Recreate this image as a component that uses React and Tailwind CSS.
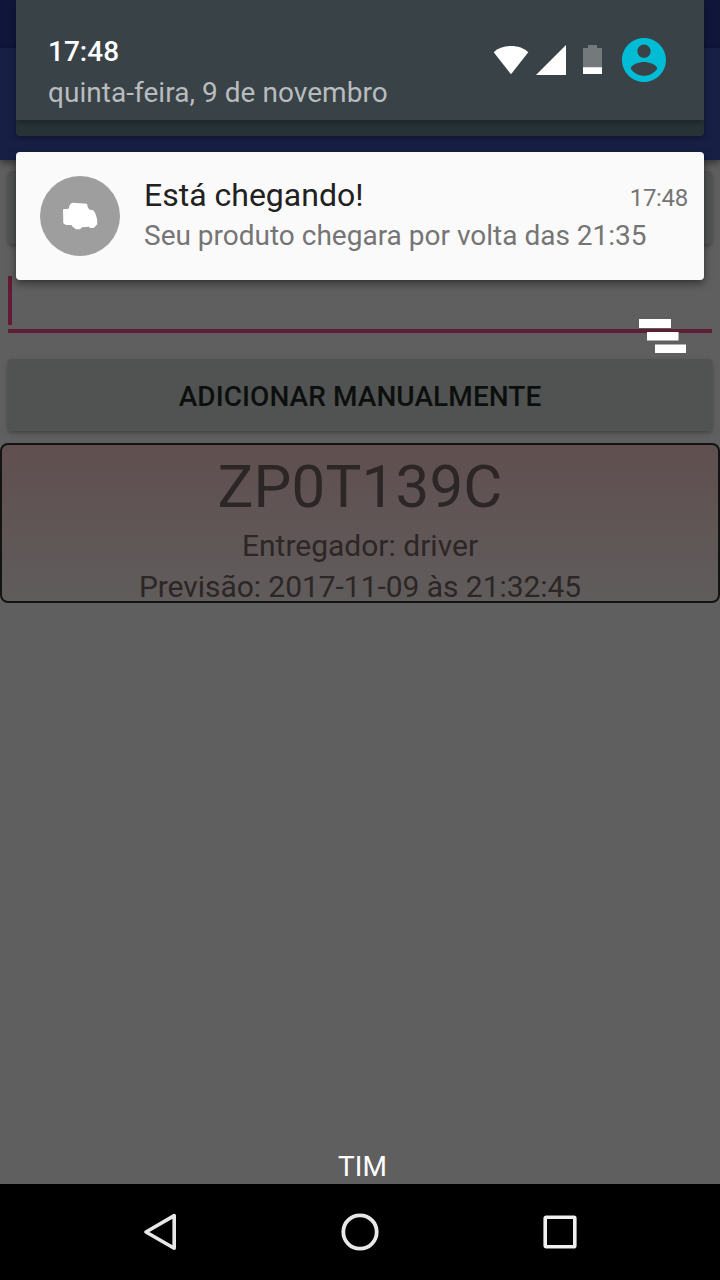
function StatusIcons() {
  return (
    <div className="flex h-11 items-center">
      <svg className="h-[30px] w-[36px]" viewBox="0 0 36 30" fill="#fff">
        <path d="M18 29.200 .7 7.300C5 3 11 1 18 1S31 3 35.300 7.300Z" />
      </svg>
      <svg className="ml-[7px] h-[30px] w-[30px]" viewBox="0 0 30 30" fill="#fff">
        <path d="M30 0V30H0Z" />
      </svg>
      <svg className="ml-[17px] h-[30px] w-[19px]" viewBox="0 0 19 30">
        <path d="M5 0H14V3H19V23H0V3H5Z" fill="#74797b" />
        <path d="M0 22.300H19V29H0Z" fill="#fff" />
      </svg>
      <svg className="ml-5 h-11 w-11" viewBox="2 2 20 20" fill="#00bcd4">
        <path d="M12 2C6.480 2 2 6.480 2 12s4.480 10 10 10 10-4.480 10-10S17.520 2 12 2zm0 3c1.660 0 3 1.340 3 3s-1.340 3-3 3-3-1.340-3-3 1.340-3 3-3zm0 14.200c-2.500 0-4.710-1.280-6-3.220.030-1.990 4-3.080 6-3.080 1.990 0 5.970 1.090 6 3.080-1.290 1.940-3.500 3.220-6 3.220z" />
      </svg>
    </div>
  );
}

function ShadeHeader() {
  return (
    <div className="h-[136px] overflow-hidden rounded-b-[4px] bg-[#263236] shadow-[0_2px_6px_rgba(0,0,0,0.35)]">
      <div className="flex h-[120px] items-start justify-between bg-[#384247] pr-[38px] pl-8 shadow-[0_2px_6px_rgba(0,0,0,0.3)]">
        <div className="pt-[34px]">
          <div className="text-[28px] leading-[36px] font-medium text-white">17:48</div>
          <div className="mt-[5px] text-[28px] leading-[36px] tracking-[0.04px] text-[#b8bcbe]">quinta-feira, 9 de novembro</div>
        </div>
        <div className="pt-[38px]">
          <StatusIcons />
        </div>
      </div>
    </div>
  );
}

function Notification() {
  return (
    <div className="mt-4 flex h-32 rounded-[4px] bg-[#fafafa] pr-4 pl-6 shadow-[0_3px_8px_rgba(0,0,0,0.5)]">
      <div className="mt-6 flex size-20 shrink-0 items-center justify-center rounded-full bg-[#9e9e9e]">
        <svg className="h-[28px] w-[36px]" viewBox="0 0 36 28" fill="#fff">
          <path d="M1 7.300 L6.700 6.700 L7.500 3.500 L9 1.500 L10.700 0.700 L18 1.300 L25 1.800 L25.700 5.300 L27.300 7.500 L31.300 8.300 L33.300 11.300 L35 16.700 L35.300 22.300 L32 25.700 L28.300 26 L26.700 24.700 L20 25.300 L18 27.300 L14 27.300 L10.700 24.700 L9.300 23 L4 23 L1.300 21.300 Z" />
        </svg>
      </div>
      <div className="ml-6 flex-1 pt-6">
        <div className="flex items-baseline justify-between">
          <span className="text-[32px] leading-[38px] text-[#212121]">Está chegando!</span>
          <span className="text-[24px] leading-[30px] tracking-[-0.3px] text-[#757575]">17:48</span>
        </div>
        <div className="mt-1 text-[28px] leading-[36px] text-[#757575]">
          Seu produto chegara por volta das 21:35
        </div>
      </div>
    </div>
  );
}

function DismissIcon() {
  return (
    <svg className="mt-[39px] mr-[18px] h-[34px] w-[47px] self-end" viewBox="0 0 47 34" fill="#fff">
      <path d="M0 0H32V9H0ZM8 13H39.500V21.500H8ZM16 25.500H47V34H16Z" />
    </svg>
  );
}

function TrackingApp() {
  return (
    <div className="flex h-[1184px] flex-col bg-[#5f5f5f]">
      <div className="h-12 shrink-0 bg-[#10163a]" />
      <div className="h-28 shrink-0 bg-[#171f45] shadow-[0_3px_7px_rgba(0,0,0,0.45)]" />
      <div className="mx-2 mt-[11px] h-[73px] shrink-0 rounded-[4px] bg-[#525453] shadow-[0_2px_4px_rgba(0,0,0,0.3)]" />
      <div className="mx-2 mt-8 h-[57px] shrink-0 border-b-4 border-[#5d1f36]">
        <div className="h-[49px] w-1 bg-[#621a35]" />
      </div>
      <div className="mx-2 mt-[26px] flex h-[72px] shrink-0 items-center justify-center rounded-[4px] bg-[#505352] pt-1 text-[28px] font-medium tracking-[0.08px] text-[#0d0f0e] shadow-[0_2px_4px_rgba(0,0,0,0.3)]">
        ADICIONAR MANUALMENTE
      </div>
      <div className="mt-3 h-[160px] shrink-0 rounded-[8px] border-2 border-[#131313] bg-linear-to-b from-[#604f4f] to-[#605c5c] text-center text-[30px] leading-[41px] text-[#2d2626]">
        <div className="pt-1 pb-px text-[60px] leading-[75px] tracking-[0.2px]">ZP0T139C</div>
        <div>Entregador: driver</div>
        <div className="tracking-[-0.05px]">Previsão: 2017-11-09 às 21:32:45</div>
      </div>
      <div className="flex-1" />
      <div className="pl-[5px] text-center text-[28px] leading-[34px] text-white">TIM</div>
    </div>
  );
}

function NavigationBar() {
  return (
    <div className="flex h-24 items-center justify-center gap-40 bg-black">
      <svg className="size-10" viewBox="0 0 40 40" fill="none" stroke="#e8e8e8" strokeWidth="3.6" strokeLinejoin="round">
        <path d="M34.200 3.600V36.200L6 20Z" />
      </svg>
      <svg className="size-10" viewBox="0 0 40 40" fill="none" stroke="#e8e8e8" strokeWidth="3.8">
        <circle cx="20" cy="20" r="16.700" />
      </svg>
      <svg className="size-10" viewBox="0 0 40 40" fill="none" stroke="#f0f0f0" strokeWidth="3.600" strokeLinejoin="round">
        <rect x="5.200" y="5.200" width="29.600" height="29.600" rx="1" />
      </svg>
    </div>
  );
}

export default function App() {
  return (
    <div className="relative h-[1280px] w-[720px] overflow-hidden bg-black font-['Roboto',sans-serif]">
      <TrackingApp />
      <NavigationBar />
      <div className="absolute inset-x-4 top-0 flex flex-col">
        <ShadeHeader />
        <Notification />
        <DismissIcon />
      </div>
    </div>
  );
}
